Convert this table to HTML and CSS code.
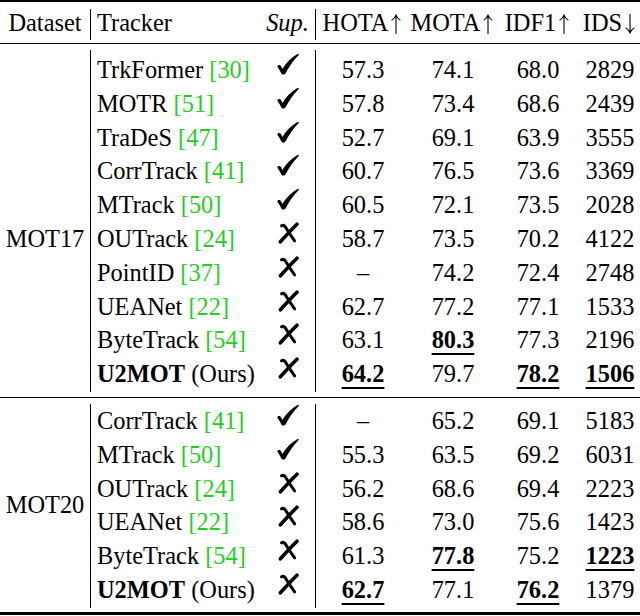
FILE: index.html
```html
<!DOCTYPE html>
<html>
<head>
<meta charset="utf-8">
<link rel="stylesheet" href="styles.css">
</head>
<body>
<svg class="defs" width="0" height="0" aria-hidden="true">
  <defs>
    <symbol id="ck" viewBox="0 0 23 22">
      <path d="M0.4 13.8C0.2 12.4 2.2 11.4 3.6 12.6C4.6 13.6 5 14.8 5.6 16.2C9.6 9.6 14.8 4.2 21.4 0.6C22.4 0.1 23.3 0.9 22.7 1.7C17 7.6 12.6 13.8 9 20.8C8.1 22.4 5.4 22.6 4.6 21C3.4 18.6 2 16 0.4 13.8Z" fill="#000"/>
    </symbol>
    <symbol id="xk" viewBox="0 0 22 22">
      <path d="M20 2.2C14 8 9 13.5 3.4 19.8" stroke="#000" stroke-width="3.6" stroke-linecap="round" fill="none"/>
      <path d="M4.6 3.8C6 2.8 7.2 3.4 8.4 5C11.2 9.5 14 14 17.6 18.8" stroke="#000" stroke-width="3" stroke-linecap="round" fill="none"/>
    </symbol>
    <symbol id="up" viewBox="0 0 14 20">
      <path d="M7 1.2V20M2.6 6.4C4.6 5 6.1 3.4 7 1.2C7.9 3.4 9.4 5 11.4 6.4" stroke="#000" stroke-width="1.1" fill="none"/>
    </symbol>
    <symbol id="down" viewBox="0 0 14 20">
      <path d="M7 0V18.8M2.6 13.6C4.6 15 6.1 16.6 7 18.8C7.9 16.6 9.4 15 11.4 13.6" stroke="#000" stroke-width="1.1" fill="none"/>
    </symbol>
  </defs>
</svg>
<div class="table">
  <div class="rule rule-top"></div>
  <div class="grid head">
    <div class="label">Dataset</div>
    <div class="tr">Tracker</div>
    <div class="sup"><i>Sup.</i></div>
    <div class="n">HOTA<svg class="arr"><use href="#up"/></svg></div>
    <div class="n">MOTA<svg class="arr"><use href="#up"/></svg></div>
    <div class="n">IDF1<svg class="arr"><use href="#up"/></svg></div>
    <div class="n">IDS<svg class="arr"><use href="#down"/></svg></div>
  </div>
  <div class="rule rule-head"></div>
  <div class="grid block b17">
    <div class="label span10 shift">MOT17</div>
    <div class="tr">TrkFormer <span class="cite">[30]</span></div><div class="sup"><svg class="mk"><use href="#ck"/></svg></div><div class="n">57.3</div><div class="n">74.1</div><div class="n">68.0</div><div class="n">2829</div>
    <div class="tr">MOTR <span class="cite">[51]</span></div><div class="sup"><svg class="mk"><use href="#ck"/></svg></div><div class="n">57.8</div><div class="n">73.4</div><div class="n">68.6</div><div class="n">2439</div>
    <div class="tr">TraDeS <span class="cite">[47]</span></div><div class="sup"><svg class="mk"><use href="#ck"/></svg></div><div class="n">52.7</div><div class="n">69.1</div><div class="n">63.9</div><div class="n">3555</div>
    <div class="tr">CorrTrack <span class="cite">[41]</span></div><div class="sup"><svg class="mk"><use href="#ck"/></svg></div><div class="n">60.7</div><div class="n">76.5</div><div class="n">73.6</div><div class="n">3369</div>
    <div class="tr">MTrack <span class="cite">[50]</span></div><div class="sup"><svg class="mk"><use href="#ck"/></svg></div><div class="n">60.5</div><div class="n">72.1</div><div class="n">73.5</div><div class="n">2028</div>
    <div class="tr">OUTrack <span class="cite">[24]</span></div><div class="sup"><svg class="mk"><use href="#xk"/></svg></div><div class="n">58.7</div><div class="n">73.5</div><div class="n">70.2</div><div class="n">4122</div>
    <div class="tr">PointID <span class="cite">[37]</span></div><div class="sup"><svg class="mk"><use href="#xk"/></svg></div><div class="n">–</div><div class="n">74.2</div><div class="n">72.4</div><div class="n">2748</div>
    <div class="tr">UEANet <span class="cite">[22]</span></div><div class="sup"><svg class="mk"><use href="#xk"/></svg></div><div class="n">62.7</div><div class="n">77.2</div><div class="n">77.1</div><div class="n">1533</div>
    <div class="tr">ByteTrack <span class="cite">[54]</span></div><div class="sup"><svg class="mk"><use href="#xk"/></svg></div><div class="n">63.1</div><div class="n"><b class="best">80.3</b></div><div class="n">77.3</div><div class="n">2196</div>
    <div class="tr"><b>U2MOT</b> (Ours)</div><div class="sup"><svg class="mk"><use href="#xk"/></svg></div><div class="n"><b class="best">64.2</b></div><div class="n">79.7</div><div class="n"><b class="best">78.2</b></div><div class="n"><b class="best">1506</b></div>
  </div>
  <div class="rule rule-mid"></div>
  <div class="grid block b20">
    <div class="label span6">MOT20</div>
    <div class="tr">CorrTrack <span class="cite">[41]</span></div><div class="sup"><svg class="mk"><use href="#ck"/></svg></div><div class="n">–</div><div class="n">65.2</div><div class="n">69.1</div><div class="n">5183</div>
    <div class="tr">MTrack <span class="cite">[50]</span></div><div class="sup"><svg class="mk"><use href="#ck"/></svg></div><div class="n">55.3</div><div class="n">63.5</div><div class="n">69.2</div><div class="n">6031</div>
    <div class="tr">OUTrack <span class="cite">[24]</span></div><div class="sup"><svg class="mk"><use href="#xk"/></svg></div><div class="n">56.2</div><div class="n">68.6</div><div class="n">69.4</div><div class="n">2223</div>
    <div class="tr">UEANet <span class="cite">[22]</span></div><div class="sup"><svg class="mk"><use href="#xk"/></svg></div><div class="n">58.6</div><div class="n">73.0</div><div class="n">75.6</div><div class="n">1423</div>
    <div class="tr">ByteTrack <span class="cite">[54]</span></div><div class="sup"><svg class="mk"><use href="#xk"/></svg></div><div class="n">61.3</div><div class="n"><b class="best">77.8</b></div><div class="n">75.2</div><div class="n"><b class="best">1223</b></div>
    <div class="tr"><b>U2MOT</b> (Ours)</div><div class="sup"><svg class="mk"><use href="#xk"/></svg></div><div class="n"><b class="best">62.7</b></div><div class="n">77.1</div><div class="n"><b class="best">76.2</b></div><div class="n">1379</div>
  </div>
  <div class="rule rule-bot"></div>
</div>
</body>
</html>
```
FILE: styles.css
```css
html, body {
  margin: 0;
  background: #fff;
}

.defs {
  position: absolute;
  width: 0;
  height: 0;
  overflow: hidden;
}

.table {
  width: 640px;
  font-family: "Liberation Serif", "Times New Roman", serif;
  font-size: 24.4px;
  color: #000;
}

.rule {
  background: #000;
}

.rule-top {
  height: 2px;
}

.rule-head {
  margin-top: 3px;
  height: 1px;
}

.rule-mid {
  margin-top: 5px;
  height: 1px;
}

.rule-bot {
  margin-top: 4px;
  height: 3px;
}

.grid {
  display: grid;
  grid-template-columns: 91px 169px 56px 94px 86px 84px 60px;
  background:
    linear-gradient(#000, #000) 90px 0 / 1px 100% no-repeat,
    linear-gradient(#000, #000) 315px 0 / 1px 100% no-repeat;
}

.head {
  margin-top: 7px;
  line-height: 27px;
  padding-bottom: 4px;
  white-space: nowrap;
}

.block {
  grid-auto-rows: 33.8px;
  line-height: 33.8px;
  white-space: nowrap;
}

.b17 {
  margin-top: 6px;
  padding: 3px 0 1px;
}

.b20 {
  margin-top: 6px;
  padding: 0 0 1.5px;
}

.label {
  grid-column: 1;
  text-align: center;
  padding-right: 1px;
}

.span10 {
  grid-row: 1 / span 10;
  align-self: center;
}

.shift {
  padding-top: 33.8px;
}

.span6 {
  grid-row: 1 / span 6;
  align-self: center;
}

.tr {
  padding-left: 6px;
}

.sup {
  text-align: center;
  padding-right: 1px;
}

.n {
  text-align: center;
}

.cite {
  color: #1fd01f;
}

.mk {
  width: 22px;
  height: 22px;
  vertical-align: 3px;
}

.arr {
  width: 14px;
  height: 20px;
  margin-left: 1px;
  vertical-align: -3px;
}

.best {
  text-decoration: underline;
  text-decoration-thickness: 1.5px;
  text-underline-offset: 5px;
}
```
